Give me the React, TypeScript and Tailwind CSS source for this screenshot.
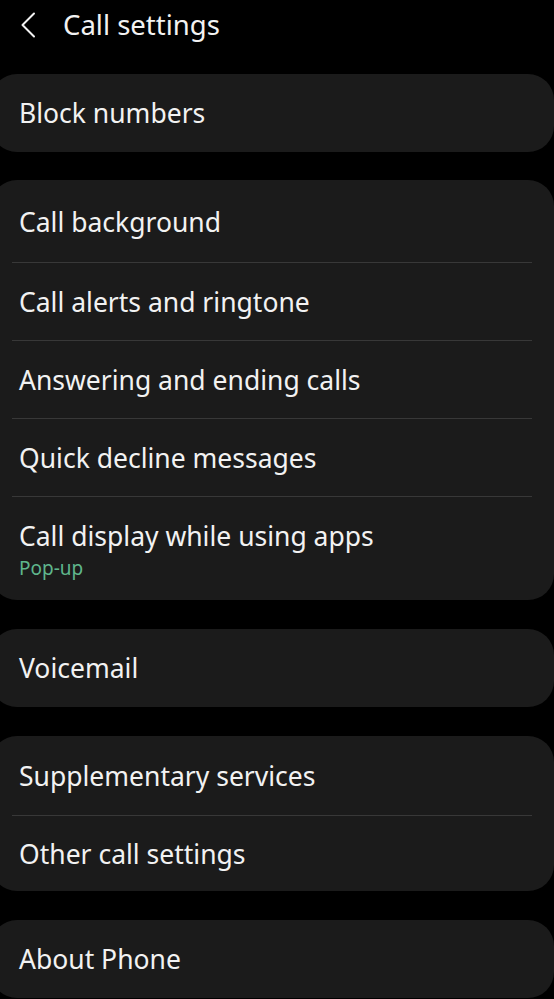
import * as React from 'react'

type Item = { label: string; sub?: string; h?: string }

const groups: Item[][] = [
    [{ label: 'Block numbers' }],
    [
        { label: 'Call background', h: 'h-[82px] pt-[2px]' },
        { label: 'Call alerts and ringtone' },
        { label: 'Answering and ending calls' },
        { label: 'Quick decline messages' },
        { label: 'Call display while using apps', sub: 'Pop-up' }
    ],
    [{ label: 'Voicemail' }],
    [{ label: 'Supplementary services', h: 'h-[79px]' }, { label: 'Other call settings', h: 'h-[75px]' }],
    [{ label: 'About Phone' }]
]

function Row({ item, first }: { item: Item; first: boolean }) {
    return (
        <div>
            {!first ? <div className="ml-[21px] mr-[22px] h-px bg-[#383838]" /> : null}
            {item.sub ? (
                <div className="pl-[28px] pt-[22px] pb-[19px]">
                    <div className="text-[26.5px] leading-[34px] text-[#f2f2f2]">{item.label}</div>
                    <div className="mt-[2px] text-[19px] leading-[26px] text-[#5fb68c]">{item.sub}</div>
                </div>
            ) : (
                <div className={`flex items-center pl-[28px] ${item.h ?? (first ? 'h-[78px]' : 'h-[77px]')}`}>
                    <div className="text-[26.5px] leading-[34px] text-[#f2f2f2]">{item.label}</div>
                </div>
            )}
        </div>
    )
}

export default function App() {
    return (
        <div className="min-h-[999px] w-[554px] overflow-hidden bg-black" style={{ fontFamily: '"Noto Sans", "Open Sans", sans-serif' }}>
            <div className="flex h-[50px] items-center">
                <svg width="18" height="26" viewBox="0 0 18 26" className="ml-[19px]" fill="none">
                    <path d="M15 1.5 L3.5 13 L15 24.5" stroke="#f2f2f2" strokeWidth="2" strokeLinecap="round" strokeLinejoin="round" />
                </svg>
                <div className="ml-[26px] text-[27.5px] text-[#f2f2f2]">Call settings</div>
            </div>
            <div className="mt-[24px] flex flex-col gap-[29px]">
                {groups.map((g, gi) => (
                    <div key={gi} className={`ml-[-9px] w-[563px] rounded-[26px] bg-[#1b1b1b] ${gi === 1 ? 'mt-[-1px]' : ''}`}>
                        {g.map((item, i) => (
                            <Row key={item.label} item={item} first={i === 0} />
                        ))}
                    </div>
                ))}
            </div>
        </div>
    )
}
